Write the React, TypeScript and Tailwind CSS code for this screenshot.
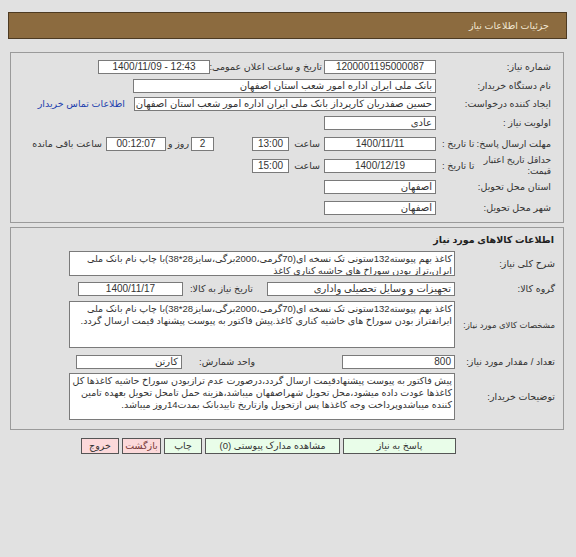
import React from 'react'

const Box = ({ className, children, ltr }: { className?: string; children?: React.ReactNode; ltr?: boolean }) => (
  <div
    dir={ltr ? 'ltr' : undefined}
    className={`h-[14px] shrink-0 bg-white border border-[#7a7a7a] px-[3px] text-[10px] leading-[12px] text-[#333] whitespace-nowrap overflow-hidden ${className ?? ''}`}
  >
    {children}
  </div>
)

const Area = ({ className, children }: { className?: string; children?: React.ReactNode }) => (
  <div
    className={`w-[386px] shrink-0 bg-white border border-[#7a7a7a] px-[2px] pt-[1px] text-[9.5px] leading-[12px] text-[#333] overflow-hidden ${className ?? ''}`}
  >
    {children}
  </div>
)

const Label1 = ({ children }: { children: React.ReactNode }) => (
  <div className="w-[127px] shrink-0 pr-[12px] whitespace-nowrap">{children}</div>
)

const Label2 = ({ children, className }: { children: React.ReactNode; className?: string }) => (
  <div className={`w-[108px] shrink-0 pr-[8px] whitespace-nowrap ${className ?? ''}`}>{children}</div>
)

export default function App() {
  return (
    <div
      dir="rtl"
      className="w-[576px] h-[557px] bg-[#e1e1e1] pt-[12px] font-['Liberation_Sans','DejaVu_Sans',sans-serif] text-[9.5px] leading-[12px] text-[#333]"
    >
      <div className="ml-[8px] mr-[9px] h-[27px] bg-[#8c6b3f] border border-[#4d3a22] flex items-center pr-[17px] text-[#f1e7d2]">
        جزئیات اطلاعات نیاز
      </div>

      {/* panel 1 */}
      <div className="ml-[10px] mr-[12px] mt-[13px] h-[171px] border border-[#9a9a9a] pt-[3px]">
        <div className="flex items-center h-[21px]">
          <Label1>شماره نیاز:</Label1>
          <Box ltr className="w-[112px] text-center">1200001195000087</Box>
          <div className="w-[114px] shrink-0 pr-[2px] whitespace-nowrap">تاریخ و ساعت اعلان عمومی:</div>
          <Box ltr className="w-[112px] text-center">1400/11/09 - 12:43</Box>
        </div>
        <div className="flex items-center h-[18px]">
          <Label1>نام دستگاه خریدار:</Label1>
          <Box className="w-[303px] text-[9.5px]">بانک ملی ایران اداره امور شعب استان اصفهان</Box>
        </div>
        <div className="flex items-center h-[17px]">
          <Label1>ایجاد کننده درخواست:</Label1>
          <Box className="w-[302px] text-[9.5px]">حسین صفدریان کارپرداز بانک ملی ایران اداره امور شعب استان اصفهان</Box>
          <div className="mr-[9px] text-[#1d3fae] whitespace-nowrap">اطلاعات تماس خریدار</div>
        </div>
        <div className="flex items-center h-[22px]">
          <Label1>اولویت نیاز :</Label1>
          <Box className="w-[112px] text-[9.5px]">عادی</Box>
        </div>
        <div className="flex items-center h-[19px]">
          <div className="w-[127px] shrink-0 pr-[12px] pl-[6px] flex justify-between whitespace-nowrap">
            <span>مهلت ارسال پاسخ:</span>
            <span>تا تاریخ :</span>
          </div>
          <Box ltr className="w-[112px] text-center">1400/11/11</Box>
          <div className="w-[35px] shrink-0 pr-[4px]">ساعت</div>
          <Box ltr className="w-[37px] text-center">13:00</Box>
          <div className="w-[38px] shrink-0" />
          <Box ltr className="w-[23px] text-center">2</Box>
          <div className="w-[25px] shrink-0 pr-[2px] whitespace-nowrap">روز و</div>
          <Box ltr className="w-[60px] text-center bg-[#f0f0c9] text-[#8e8e3e]">00:12:07</Box>
          <div className="pr-[4px] whitespace-nowrap">ساعت باقی مانده</div>
        </div>
        <div className="flex items-center h-[25px]">
          <div className="w-[127px] shrink-0 pr-[12px] pl-[6px] flex justify-between items-center">
            <span className="w-[72px] leading-[11px] text-[9px]">حداقل تاریخ اعتبار قیمت:</span>
            <span className="whitespace-nowrap">تا تاریخ :</span>
          </div>
          <Box ltr className="w-[112px] text-center">1400/12/19</Box>
          <div className="w-[35px] shrink-0 pr-[4px]">ساعت</div>
          <Box ltr className="w-[37px] text-center">15:00</Box>
        </div>
        <div className="flex items-center h-[18px]">
          <Label1>استان محل تحویل:</Label1>
          <Box className="w-[112px] text-[9.5px]">اصفهان</Box>
        </div>
        <div className="flex items-center h-[24px]">
          <Label1>شهر محل تحویل:</Label1>
          <Box className="w-[112px] text-[9.5px]">اصفهان</Box>
        </div>
      </div>

      {/* panel 2 */}
      <div className="ml-[10px] mr-[12px] mt-[4px] h-[203px] border border-[#9a9a9a] pt-[1px]">
        <div className="h-[22px] flex items-center pr-[9px] font-bold text-[#222]">اطلاعات کالاهای مورد نیاز</div>
        <div className="flex items-center">
          <Label2>شرح کلی نیاز:</Label2>
          <Area className="h-[25px]">
            کاغذ بهم پیوسته132ستونی تک نسخه ای(70گرمی،2000برگی،سایز28*38)با چاپ نام بانک ملی ایران،تراز بودن سوراخ های حاشیه کناری کاغذ
          </Area>
        </div>
        <div className="flex items-center h-[19px] mt-[3px]">
          <Label2>گروه کالا:</Label2>
          <Box className="w-[188px] text-[9.5px]">تجهیزات و وسایل تحصیلی واداری</Box>
          <div className="w-[84px] shrink-0 pr-[14px] whitespace-nowrap">تاریخ نیاز به کالا:</div>
          <Box ltr className="w-[105px] text-center">1400/11/17</Box>
        </div>
        <div className="flex items-center mt-[3px]">
          <Label2 className="text-[8.5px] pr-[7px]">مشخصات کالای مورد نیاز:</Label2>
          <Area className="h-[47px]">
            کاغذ بهم پیوسته132ستونی تک نسخه ای(70گرمی،2000برگی،سایز28*38)با چاپ نام بانک ملی ایرانفتراز بودن سوراخ های حاشیه کناری کاغذ.پیش فاکتور به پیوست پیشنهاد قیمت ارسال گردد.
          </Area>
        </div>
        <div className="flex items-center h-[21px] mt-[3px]">
          <Label2>تعداد / مقدار مورد نیاز:</Label2>
          <Box className="w-[113px]">800</Box>
          <div className="w-[160px] shrink-0 pr-[87px] whitespace-nowrap">واحد شمارش:</div>
          <Box className="w-[106px] text-[9.5px]">کارتن</Box>
        </div>
        <div className="flex items-center mt-[1px]">
          <Label2>توضیحات خریدار:</Label2>
          <Area className="h-[47px]">
            پیش فاکتور به پیوست پیشنهادقیمت ارسال گردد،درصورت عدم ترازبودن سوراخ حاشیه کاغذها کل کاغذها عودت داده میشود،محل تحویل شهراصفهان میباشد،هزینه حمل تامحل تحویل بعهده تامین کننده میباشدوپرداخت وجه کاغذها پس ازتحویل وازتاریخ تاییدبانک بمدت14روز میباشد.
          </Area>
        </div>
      </div>

      {/* buttons */}
      <div className="flex gap-[3px] mr-[120px] mt-[8px]">
        <div className="w-[113px] h-[16px] flex items-center justify-center bg-[#e9fde9] border border-[#555]">پاسخ به نیاز</div>
        <div className="w-[135px] h-[16px] flex items-center justify-center bg-[#e9fde9] border border-[#555]">مشاهده مدارک پیوستی (0)</div>
        <div className="w-[38px] h-[16px] flex items-center justify-center bg-[#e9fde9] border border-[#555]">چاپ</div>
        <div className="w-[39px] h-[16px] flex items-center justify-center bg-[#fcd9da] border border-[#555] text-[#7a3a3a]">بازگشت</div>
        <div className="w-[38px] h-[16px] flex items-center justify-center bg-[#fcd9da] border border-[#555]">خروج</div>
      </div>
    </div>
  )
}
